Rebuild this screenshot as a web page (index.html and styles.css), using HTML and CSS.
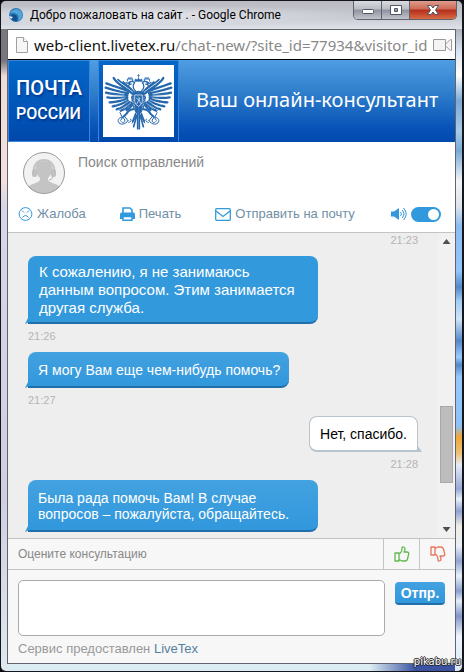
FILE: index.html
```html
<!DOCTYPE html>
<html lang="ru">
<head>
<meta charset="utf-8">
<title>Добро пожаловать на сайт . - Google Chrome</title>
<link rel="stylesheet" href="styles.css">
</head>
<body>
<div class="window">
  <header class="titlebar">
    <svg class="favicon" width="16" height="16" viewBox="0 0 16 16" aria-hidden="true">
      <circle cx="8" cy="8" r="7" fill="#2a78b4"/>
      <path d="M2 6C5 1 12 1 14 6c1 4-1 7-4 8 2-5 0-9-8-8z" fill="#55a4d8"/>
      <path d="M3 8c4-2 7 1 6 6-3 1-6-1-6-6z" fill="#164f8e"/>
      <path d="M1 9l4 1-2 2z" fill="#e9f6ff"/>
    </svg>
    <h1 class="title">Добро пожаловать на сайт . - Google Chrome</h1>
    <div class="controls">
      <button class="control" aria-label="Свернуть"><svg width="14" height="14" viewBox="0 0 14 14"><rect x="1.500" y="6.500" width="11" height="4" rx="1" fill="#fff" stroke="#535666"/></svg></button>
      <button class="control" aria-label="Развернуть"><svg width="14" height="14" viewBox="0 0 14 14"><path fill-rule="evenodd" d="M1.500 2.500h11v9h-11zM5.500 5.500v3h3v-3z" fill="#fff" stroke="#535666"/></svg></button>
      <button class="control close" aria-label="Закрыть"><svg width="14" height="14" viewBox="0 0 14 14"><path d="M1.500 2.500h3.500l2 2.500 2-2.500h3.500L9.500 7l3 4.500H9L7 9l-2 2.500H1.500l3-4.500z" fill="#fff" stroke="#535666"/></svg></button>
    </div>
  </header>

  <main class="page">
    <div class="address">
      <svg width="12" height="16" viewBox="0 0 12 16" aria-hidden="true"><path d="M.5.5h7l4 4v11H.5z" fill="#f6f6f6" stroke="#a0a0a0"/><path d="M7.500.5v4h4" fill="#fff" stroke="#a0a0a0"/></svg>
      <div class="url">web-client.livetex.ru<span class="path">/chat-new/?site_id=77934&amp;visitor_id</span></div>
      <svg width="19" height="14" viewBox="0 0 19 14" aria-hidden="true"><path d="M.5 1.500h12v11H.5zM12.500 6l5-4.500h1v11h-1l-5-4.500z" fill="#f4f4f4" stroke="#999"/></svg>
    </div>

    <section class="banner">
      <div class="wordmark"><span class="word-top">ПОЧТА</span><span class="word-bottom">РОССИИ</span></div>
      <div class="emblem">
        <svg viewBox="309 27 213 216" aria-hidden="true">
          <defs>
            <g id="half">
              <g fill="none" stroke="#2668ad" stroke-linecap="round">
                <path stroke-width="7" d="M396 112C378 96 352 86 341 66M388 106C362 96 334 88 319 82M384 112C356 106 330 100 317 95M382 118C356 116 332 114 318 110M382 124C358 126 336 127 322 124M382 130C362 134 344 139 329 139M384 135C368 142 354 149 338 151M388 138C374 148 366 156 350 160M393 140C384 150 378 158 364 163M398 143C393 152 390 158 380 162"/>
                <path stroke-width="5" d="M394 101C378 88 364 80 354 71M401 107C392 94 378 88 370 78"/>
                <path stroke="#fff" stroke-width="1.500" d="M326 90l44 15M326 104l46 10M330 118l42 0M334 133l40-7M346 146l34-14M358 154l28-19M372 158l20-17"/>
                <path stroke-width="4" d="M407 106C398 98 397 86 404 80M404 80C397 74 389 76 384 82l-6-2M390 78l-3 9 7-3"/>
                <path stroke-width="3" stroke-dasharray="3 2" d="M382 75v-6h16v6M385 66h11"/>
                <path stroke-width="6" d="M403 159C391 160 384 164 379 174l-9 8"/>
                <path stroke-width="3" d="M360 170l6 13M373 180l11 14M370 181l-8 12M384 194c-8 13-25 14-29 3s13-17 18-8-4 15-9 8M362 167l-3-5M386 199c8-1 10-7 5-10M397 201l10-17"/>
                <path stroke-width="5" stroke-dasharray="4 1" d="M407 173l-9 23M410 178l-9 34M413 175v43"/>
              </g>
              <path fill="#2668ad" d="M416 104l-16 3-7 17 5 28 9 18 9 6z"/>
              <path fill="none" stroke="#fff" stroke-width="2" stroke-dasharray="2 3" d="M398 118l6 36M395 130l10 30"/>
            </g>
          </defs>
          <use href="#half"/>
          <use href="#half" transform="matrix(-1 0 0 1 831 0)"/>
          <path d="M415.500 54v12M411 59h9M404 76l2-7 6 3 3.500-6 3.500 6 6-3 2 7z" fill="#2668ad" stroke="#2668ad" stroke-width="2"/>
          <path d="M404 117h23v20q-2 10-11.500 14-9.500-4-11.500-14z" fill="#2668ad" stroke="#fff" stroke-width="2"/>
          <path d="M410 144l10-18M409 127l8 4 5 12M414 122l5 5" fill="none" stroke="#fff" stroke-width="2"/>
        </svg>
      </div>
      <h2 class="banner-title">Ваш онлайн-консультант</h2>
    </section>

    <section class="operator">
      <div class="person">
        <svg class="avatar" width="42" height="42" viewBox="0 0 42 42" aria-hidden="true">
          <circle cx="21" cy="21" r="20.500" fill="#f2f2f2"/>
          <path d="M5 35c2-3 11-4 12-7v-2c-6-5-7-17 4-17s10 12 4 17v2c1 3 10 4 12 7-9 8-23 8-32 0z" fill="#c4c4c4"/>
          <path d="M11 20C9 4 33 4 31 20" fill="none" stroke="#c4c4c4" stroke-width="2"/>
          <rect x="9" y="17" width="5" height="8" rx="2" fill="#c0c0c0"/><rect x="28" y="17" width="5" height="8" rx="2" fill="#c0c0c0"/>
          <path d="M30 24q0 4-4 4" fill="none" stroke="#bbb"/>
          <circle cx="21" cy="21" r="20.500" fill="none" stroke="#999"/>
        </svg>
        <p class="name">Поиск отправлений</p>
      </div>
      <nav class="tools">
        <button class="tool"><svg width="15" height="14" viewBox="0 0 15 14" fill="none" stroke="#3399dd"><circle cx="7.500" cy="7" r="6.400"/><path d="M4.500 10.500q3-4 6 0M4 3.500l2 2M11 3.500l-2 2"/></svg>Жалоба</button>
        <button class="tool"><svg width="15" height="14" viewBox="0 0 15 14"><path d="M3 6V1h7l2 2v3" fill="#fff" stroke="#3399dd" stroke-width="1.600"/><path d="M1.500 5.500h12q1.500 0 1.500 2V12H0V7.500q0-2 1.500-2z" fill="#3399dd"/><path d="M3 9.500h9v3.700H3z" fill="#fff" stroke="#3399dd" stroke-width="1.500"/></svg>Печать</button>
        <button class="tool"><svg width="16" height="13" viewBox="0 0 16 13" fill="none" stroke="#3399dd" stroke-width="1.300"><rect x=".7" y=".7" width="14.600" height="11.600" rx="1"/><path d="M1 3l7 5.500L15 3"/></svg>Отправить на почту</button>
        <label class="sound">
          <svg width="16" height="14" viewBox="0 0 16 14" aria-hidden="true"><path d="M0 4.500h3L8 1v12L3 9.500H0z" fill="#3399dd"/><path d="M9.500 5q2 2 0 4M11 3q4 4 0 8M12.500 1q5.500 6 0 12" fill="none" stroke="#3399dd"/></svg>
          <input class="toggle" type="checkbox" role="switch" aria-label="Звук" checked>
        </label>
      </nav>
    </section>

    <section class="chat">
      <div class="messages">
        <div class="message own"><time>21:23</time></div>
        <div class="message"><p class="bubble large">К сожалению, я не занимаюсь<br>данным вопросом. Этим занимается<br>другая служба.</p><time>21:26</time></div>
        <div class="message"><p class="bubble">Я могу Вам еще чем-нибудь помочь?</p><time>21:27</time></div>
        <div class="message own"><p class="bubble">Нет, спасибо.</p><time>21:28</time></div>
        <div class="message"><p class="bubble wide">Была рада помочь Вам! В случае<br>вопросов – пожалуйста, обращайтесь.</p></div>
      </div>
      <div class="scrollbar" aria-hidden="true">
        <span class="arrow up"></span>
        <div class="track"><span class="thumb"></span></div>
        <span class="arrow down"></span>
      </div>
    </section>

    <section class="rating">
      <span class="rating-text">Оцените консультацию</span>
      <button class="rate good" aria-label="Хорошо"><svg width="16" height="16" viewBox="0 0 16 16"><path d="M1 7h4v8H1zM5 8c2-1 3-3 3-6 0-2 3-1 3 1 0 1-1 3-1 3h3q2 0 1.700 2L13.500 13q-.5 2-2.500 2H8l-3-1.500"/></svg></button>
      <button class="rate bad" aria-label="Плохо"><svg width="16" height="16" viewBox="0 0 16 16"><path d="M1 7h4v8H1zM5 8c2-1 3-3 3-6 0-2 3-1 3 1 0 1-1 3-1 3h3q2 0 1.700 2L13.500 13q-.5 2-2.500 2H8l-3-1.500"/></svg></button>
    </section>

    <footer class="compose">
      <form class="form">
        <textarea class="text" aria-label="Сообщение"></textarea>
        <button class="send" type="button">Отпр.</button>
      </form>
      <p class="service">Сервис предоставлен <a href="#">LiveTex</a></p>
    </footer>
  </main>
  <span class="watermark">pikabu.ru</span>
</div>
</body>
</html>
```
FILE: styles.css
```css
* { box-sizing: border-box; }

body {
  margin: 0;
  background: #0a0a12;
  font-family: "Liberation Sans", sans-serif;
}

h1, h2, p { margin: 0; font-weight: 400; }

button { font-family: inherit; cursor: pointer; }

svg { display: block; flex: none; }

.window {
  position: relative;
  display: flex;
  flex-direction: column;
  min-height: 100vh;
  padding: 0 6px 7px;
  border: solid #15151c;
  border-width: 1px 2px 1px 1px;
  border-radius: 6px;
  background:
    linear-gradient(#73747c 0, #d9e4f0 50px, #fff 74px, #7ba8d4 100px, #a9cbe9 130px, #78a9d3 150px, #f2f5f8 180px, #dfe5ec 205px, #8bbdf0 225px, #92c5f8 270px, #5487c8 286px, #a2cdf5 300px, #cfe4f9 318px, #5487c8 340px, #9dccfb 356px, #5487c8 364px, #96c8fa 376px, #8cc2f8 425px, #efa638 436px, #efc070 452px, #e5ecf6 464px, #98a8d8 488px, #e9f0f8 498px, #8ea1d4 510px, #eeece2 525px, #e9eff6 545px, #8fa5d0 560px, #e9f1f8 575px, #88a0d0 590px, #e6eef6 600px, #8095cc 615px, #eef4fa 635px, #dbe9f4 100%) right / 7px 100% no-repeat,
    linear-gradient(#7b7a80 0, #77767c 60px, #efdcd8 75px, #f4dfdc 180px, #d6d6e6 205px, #cfcfe0 500px, #dfe9ee 100%) left / 7px 100% no-repeat,
    linear-gradient(90deg, #dcecf3 80%, #3b53a0 90%);
}

.titlebar {
  display: flex;
  align-items: center;
  height: 28px;
  margin: 0 -6px;
  padding: 0 5px 0 7px;
  gap: 6px;
  border-radius: 5px 5px 0 0;
  background: radial-gradient(ellipse at 28% 50%, #eceef2cc 0, #eceef200 50%), linear-gradient(#b9bac2, #c8cbd2 60%, #dfe3e8);
}

.title {
  flex: 1;
  font: 12px/20px Roboto, sans-serif;
  color: #000;
  white-space: nowrap;
}

.controls {
  display: flex;
  align-self: flex-start;
  height: 19px;
  border: 1px solid #60636e;
  border-top: 0;
  border-radius: 0 0 5px 5px;
  overflow: hidden;
}

.control {
  display: flex;
  align-items: center;
  justify-content: center;
  width: 28px;
  padding: 0;
  border: 0;
  border-right: 1px solid #60636e;
  background: linear-gradient(#dadbe0, #b9bcc5 45%, #90939f 50%, #c1c4cc);
}

.close {
  width: 46px;
  border-right: 0;
  background: linear-gradient(#df9c8c, #cc6a55 45%, #b52c1a 50%, #d66c45);
}

.page {
  flex: 1;
  display: flex;
  flex-direction: column;
  border: 1px solid #60646c;
  background: #fff;
}

.address {
  display: flex;
  align-items: center;
  height: 30px;
  padding: 0 3px 0 8px;
  border-bottom: 1px solid #000;
}

.url {
  flex: 1;
  min-width: 0;
  margin-left: 6px;
  overflow: hidden;
  font: 15px/20px "Noto Sans", sans-serif;
  color: #111;
  white-space: nowrap;
}

.path { color: #888; }

.banner {
  display: flex;
  height: 82px;
  background: linear-gradient(#4f9de3, #2f7ecb 40%, #0a55b9 80%, #0049ae);
  color: #fff;
}

.wordmark {
  display: flex;
  flex-direction: column;
  width: 82px;
  padding: 15px 0 0 7px;
  border: 1px solid #3b86db;
  background: linear-gradient(#0467c8, #0048ac);
  font-family: Roboto, sans-serif;
  font-weight: 500;
  line-height: 25px;
  text-shadow: 1px 2px 2px #003a8c;
}

.word-top { font-size: 20px; }

.word-bottom { font-size: 16px; }

.emblem {
  width: 81px;
  margin-left: 8px;
  padding: 4px;
  border: 1px solid #3b86db;
  border-bottom-color: #0048ac;
  background: linear-gradient(#0467c8, #0048ac);
}

.emblem svg {
  width: 71px;
  height: 72px;
  background: #fff;
}

.banner-title {
  margin-left: 17px;
  font: 20px/80px "Noto Sans", sans-serif;
  white-space: nowrap;
}

.operator {
  height: 91px;
  padding: 10px 14px 0 10px;
  border-bottom: 1px solid #c4c4c4;
}

.person {
  display: flex;
  gap: 13px;
  padding-left: 5px;
}

.name {
  padding-top: 2px;
  font-size: 14px;
  line-height: 16px;
  color: #888;
}

.tools {
  display: flex;
  align-items: center;
  gap: 34px;
  height: 20px;
  margin-top: 10px;
}

.tool {
  display: flex;
  align-items: center;
  gap: 4px;
  padding: 0;
  border: 0;
  background: none;
  font-size: 13px;
  line-height: 16px;
  color: #708fa5;
  white-space: nowrap;
}

.sound {
  display: flex;
  align-items: center;
  gap: 4px;
  margin-left: auto;
}

.toggle {
  appearance: none;
  display: flex;
  justify-content: flex-end;
  align-items: center;
  width: 30px;
  height: 15px;
  margin: 0;
  padding: 2px;
  border-radius: 8px;
  background: #3399dd;
}

.toggle::before {
  content: "";
  width: 11px;
  height: 11px;
  border-radius: 50%;
  background: #fff;
}

.chat {
  flex: 1;
  display: flex;
  min-height: 305px;
  background: #eee;
}

.messages {
  flex: 1;
  display: flex;
  flex-direction: column;
  justify-content: flex-end;
  gap: 8px;
  padding: 0 20px 6px;
}

.message {
  display: flex;
  flex-direction: column;
  align-items: flex-start;
  gap: 4px;
}

.own { align-items: flex-end; }

time {
  font-size: 11px;
  line-height: 16px;
  color: #b5b5b5;
}

.message:first-child time { line-height: 15px; }

.bubble {
  position: relative;
  padding: 10px 9px 8px 10px;
  border-bottom: 2px solid #206fa8;
  border-radius: 8px 8px 8px 0;
  background: linear-gradient(#43a2e0, #3197dc);
  font-size: 14px;
  line-height: 16px;
  color: #fff;
}

.bubble::after {
  content: "";
  position: absolute;
  left: -3px;
  bottom: -2px;
  width: 6px;
  height: 6px;
  background: #3399dd;
  clip-path: polygon(50% 0, 100% 60%, 0 100%);
}

.large, .wide { width: 290px; }

.large {
  padding: 7px 11px 5px;
  background: #3399dd;
  font-size: 15px;
  line-height: 18px;
}

.own .bubble {
  padding: 9px 10px 8px;
  border: 1px solid #b9c3cb;
  border-bottom-width: 2px;
  border-radius: 8px 8px 0 8px;
  background: #fff;
  color: #000;
}

.own .bubble::after {
  left: auto;
  right: -5px;
  background: #b9c3cb;
  clip-path: polygon(30% 0, 100% 100%, 0 100%);
}

.scrollbar {
  display: flex;
  flex-direction: column;
  align-items: center;
  width: 17px;
  padding: 6px 0;
  background: #f1f1f1;
}

.arrow {
  width: 8px;
  height: 5px;
  background: #505050;
  clip-path: polygon(50% 0, 100% 100%, 0 100%);
}

.down { clip-path: polygon(0 0, 100% 0, 50% 100%); }

.track {
  flex: 1;
  display: grid;
  grid-template-rows: 162fr 77fr 44fr;
}

.thumb {
  grid-row: 2;
  width: 13px;
  border: 1px solid #a8a8a8;
  background: #bcbcbc;
}

.rating {
  display: flex;
  align-items: center;
  height: 32px;
  border: solid #c4c4c4;
  border-width: 1px 0;
  background: #f7f7f7;
}

.rating-text {
  flex: 1;
  padding-left: 10px;
  font-size: 12px;
  line-height: 16px;
  color: #888;
}

.rate {
  display: flex;
  align-items: center;
  justify-content: center;
  align-self: stretch;
  width: 36px;
  padding: 0;
  border: 0;
  border-left: 1px solid #c4c4c4;
  background: none;
}

.rate svg {
  fill: none;
  stroke-width: 1.3;
  stroke-linejoin: round;
}

.good svg { stroke: #62b74e; }

.bad svg {
  stroke: #e9755b;
  transform: scaleY(-1);
}

.compose {
  padding: 10px 10px 6px;
  background: #f7f7f7;
}

.form {
  display: flex;
  align-items: flex-start;
  gap: 10px;
}

.text {
  flex: 1;
  min-width: 0;
  height: 56px;
  padding: 6px;
  border: 1px solid #aaa;
  border-radius: 5px;
  background: #fff;
  font: 14px/16px "Liberation Sans", sans-serif;
  resize: none;
}

.send {
  width: 50px;
  height: 23px;
  margin-top: 2px;
  padding: 0;
  border: 0;
  border-bottom: 2px solid #206fa8;
  border-radius: 4px;
  background: linear-gradient(#43a2e0, #3197dc);
  font-size: 14px;
  font-weight: 700;
  line-height: 16px;
  color: #fff;
}

.service {
  margin-top: 5px;
  font-size: 13px;
  line-height: 16px;
  color: #999;
}

.service a {
  color: #5580a0;
  text-decoration: none;
}

.watermark {
  position: absolute;
  right: 1px;
  bottom: 2px;
  font: 10px/14px "DejaVu Sans", sans-serif;
  color: #fff;
  text-shadow: 1px 0 #222, -1px 0 #222, 0 1px #222, 0 -1px #222;
}
```
